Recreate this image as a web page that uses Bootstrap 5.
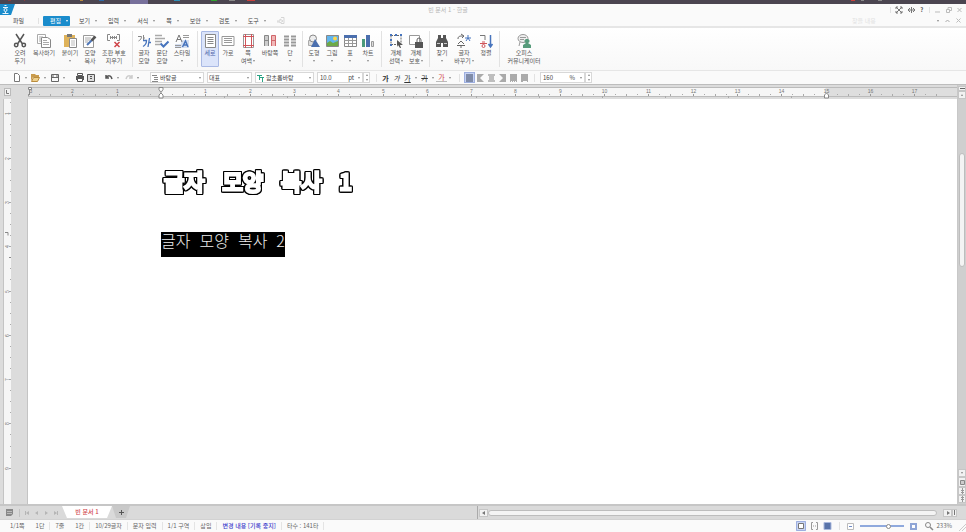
<!DOCTYPE html>
<html lang="ko">
<head>
<meta charset="utf-8">
<meta name="viewport" content="width=device-width, initial-scale=1">
<title>빈 문서 1 - 한글</title>
<link href="https://cdn.jsdelivr.net/npm/bootstrap@5.3.0/dist/css/bootstrap.min.css" rel="stylesheet">
<style>
body{font-family:"Noto Sans CJK KR",sans-serif;font-size:6px;line-height:8px;color:#555;background:#dcdcdc;overflow:hidden}
button,select,input{font:inherit;color:inherit}
button{background:none;border:0;padding:0}
svg{display:block;flex:none;overflow:visible}
.strip{height:4px;background:#4b4550}
.titlebar{height:11px;background:#fafafa}
.titlebar h1{font-size:6px;line-height:12px;color:#b5b5b5;font-weight:400}
.wincontrols{width:85px;padding:0 4px 0 9px}
.menubar{height:13px;background:#fafafa;border-bottom:2px solid #e6e6e6;padding-left:7px}
.menubtn{height:10px;padding:0 2px 0 7px;gap:5px;color:#444}
.menubtn.current{background:#1a8ccc;color:#fff;border-radius:1px}
.filebtn{width:23px;height:10px;color:#444}
.vline{width:1px;background:#e2e2e2;flex:none}
.caret{width:0;height:0;border:1px solid transparent;border-top:2px solid #888;border-bottom:0;flex:none;display:inline-block}
.current .caret{border-top-color:#fff}
.search{width:84px}
.search input{width:30px;border:0;background:none;padding:0;height:9px;line-height:9px}
.search input::placeholder{color:#e2e2e2;opacity:1}
.ribbon{height:43px;background:linear-gradient(#fff,#f8f8f8);border-bottom:1px solid #e6e6e6;padding:3px 11px}
.tool{height:36px;padding-top:2px;display:flex;flex-direction:column;align-items:center;flex:none;white-space:nowrap;border:1px solid transparent;border-radius:1px}
.tool svg{width:14px;height:14px;margin-bottom:1px}
.tool .caret{margin-top:3px}
.tool .caret.inrow{margin:0 0 1px 1px}
.tool.active{background:#dbe4fa;border-color:#a9b9e4;color:#4a61a8}
.w-a{width:18px}.w-b{width:22px}.w-c{width:26px}.w-d{width:30px}.w-e{width:42px}
.split{display:flex;justify-content:center;flex:none;width:6px;height:36px}
.split.wide{width:8px}
.quick{height:14px;background:#fafafa;border-bottom:1px solid #bdbdbd;padding-left:12px}
.qset{display:flex;align-items:center}
.qset button{display:flex;align-items:center;flex:none}
.box{height:11px;border:1px solid #d8d8d8;background:#fff;display:flex;align-items:center;color:#444}
.box select{appearance:none;border:0;background:none;padding:0 0 0 1px;flex:1;min-width:0;height:9px;line-height:9px}
.box input{border:0;padding:0 0 0 2px;width:28px;height:9px;line-height:9px;flex:1;min-width:0;background:none}
.box .caret{margin-right:2px}
.spin{width:7px;height:11px;border:1px solid #d8d8d8;background:#fff;display:flex;flex-direction:column;justify-content:space-around;align-items:center}
.up{transform:rotate(180deg)}
.ga{font-size:7px;line-height:8px;color:#333;width:11px;justify-content:center}
.qset .gap-caret{margin:0 2px}
.al{width:11px;height:11px;justify-content:center}
.al.active{background:#c6d2f2;border:1px solid #9dafe0}
.work{min-height:0;flex:1}
.rulerrow{height:14px;padding:2px 0 0 4px}
.rulerrow text,.vruler text{font-family:"Liberation Sans",sans-serif}
.cornerbtn{width:7px;height:8px;background:#f2f2f2;border:1px solid #bbb;margin:1px 17px 0 0;flex:none}
.vruler{width:8px;margin-left:3px;background:#f6f6f6;border-left:1px solid #c4c4c4;flex:none}
.desk{width:17px;flex:none;border-right:1px solid #c4c4c4}
.paper{background:#fff;min-width:0;padding:67px 0 0 133px;color:#000}
.words{display:flex;width:max-content;white-space:nowrap}
.outlined{font-size:22px;line-height:28px;gap:18px;padding-left:3px;color:#fff;-webkit-text-stroke:3px #fff;filter:drop-shadow(1px 0 0 #000) drop-shadow(-1px 0 0 #000) drop-shadow(0 1px 0 #000) drop-shadow(0 -1px 0 #000);margin-bottom:38px}
.chosen{font-size:16px;line-height:16px;height:25px;gap:9px;background:#000;color:#eee;font-weight:300}
.vscroll{width:9px;background:#cfcfcf;border-left:1px solid #c8c8c8;padding:1px 0}
.sb{background:#f2f2f2;border:1px solid #c6c6c6;display:flex;align-items:center;justify-content:center;flex:none;width:8px;height:8px}
.thumb{background:#f4f4f4;border:1px solid #bdbdbd;border-radius:4px}
.vthumb{width:6px;flex:113;margin-left:1px}
.tabs{height:15px;background:#dadada;border-top:2px solid #c6c6c6}
.tabnav{width:62px;padding-left:6px}
.tabsheet{height:12px;width:50px;background:#fff;clip-path:polygon(0 0,100% 0,calc(100% - 5px) 100%,5px 100%);color:#d0454a;font-weight:500}
.addtab{height:12px;width:18px;background:#c9c9c9;clip-path:polygon(0 0,100% 0,calc(100% - 4px) 100%,4px 100%);color:#555;display:flex;align-items:center;justify-content:center}
.hscroll{width:50.6%;padding:0 9px 0 1px;border-left:1px solid #aaa}
.hthumb{height:6px;margin-right:6px}
.status{height:13px;background:#fafafa;border-top:1px solid #d2d2d2;color:#666;white-space:nowrap}
.status .cell{padding:0 5px;border-right:1px solid #e4e4e4}
.status .cell.plain{border-color:transparent}
.zoomr{appearance:none;width:44px;height:8px;margin:0 2px;background:linear-gradient(#8fa9dd,#8fa9dd) center/100% 2px no-repeat}
.zoomr::-webkit-slider-thumb{appearance:none;width:5px;height:5px;border-radius:50%;border:1px solid #8a8a8a;background:#fff}
.zoomr::-webkit-slider-runnable-track{height:5px}
</style>
<script src="https://cdn.jsdelivr.net/npm/bootstrap@5.3.0/dist/js/bootstrap.bundle.min.js"></script>
</head>
<body class="d-flex flex-column vh-100">
<header>
  <div class="strip overflow-hidden"><svg width="100%" height="4"><path fill="#8b3c3c" d="M8 0h3v1H8zM24 0h1v1h-1z"/><path fill="#b98b3c" d="M80 0h3v1h-3z"/><path fill="#2e69a8" d="M99 0h5v1h-5z"/><path fill="#77709b" d="M130 0h18v4h-18z"/><path fill="#2e8fb8" d="M174 0h6v1h-6z"/><path fill="#2fa32f" d="M211 0h6v1h-6z"/><path fill="#888" d="M229 0h6v1h-6zM861 0h3v1h-3zM878 0h4v1h-4z"/><path fill="#c8403c" d="M247 0h8v1h-8zM851 0h4v1h-4z"/></svg></div>
  <div class="titlebar d-flex">
    <svg width="15" height="11"><path fill="#1a8ccc" d="M0 0h15l-4 11H0z"/><g stroke="#fff" stroke-width=".9" fill="none"><path d="M4.500 1.500h2M3 3.500h5M2.500 9.500h6M5.500 8v1.500"/><circle cx="5.500" cy="6" r="1.500"/></g></svg>
    <h1 class="flex-fill text-center m-0">빈 문서 1 - 한글</h1>
    <div class="wincontrols d-flex align-items-center justify-content-between">
      <span class="vline" style="height:6px"></span>
      <button aria-label="전체 화면"><svg width="6" height="6" stroke="#777" fill="none"><path d="M0 0l6 6M6 0L0 6M0 2V0h2M4 0h2v2M6 4v2H4M2 6H0V4"/></svg></button>
      <button aria-label="너비"><svg width="7" height="6" stroke="#777" fill="none"><path d="M0 3h7M2 1L0 3l2 2M5 1l2 2-2 2M3.500 0v6"/></svg></button>
      <button aria-label="도움말" class="fw-bold">?</button>
      <span class="vline" style="height:6px"></span>
      <button aria-label="최소화"><svg width="5" height="6" stroke="#bbb"><path d="M0 5h5"/></svg></button>
      <button aria-label="이전 크기"><svg width="6" height="6" stroke="#bbb" fill="none"><path d="M.5 2.500h3v3h-3zM2 2V.5h3.500v3H4"/></svg></button>
      <button aria-label="닫기"><svg width="5" height="6" stroke="#bbb"><path d="M.5 1l4 4M4.500 1l-4 4"/></svg></button>
    </div>
  </div>
  <nav class="menubar d-flex align-items-center">
    <button class="filebtn">파일</button><span class="vline" style="height:6px;margin:0 4px 0 8px"></span>
    <div class="d-flex" style="gap:2px">
      <button class="menubtn current d-flex align-items-center">편집<i class="caret"></i></button>
      <button class="menubtn d-flex align-items-center">보기<i class="caret"></i></button>
      <button class="menubtn d-flex align-items-center">입력<i class="caret"></i></button>
      <button class="menubtn d-flex align-items-center">서식<i class="caret"></i></button>
      <button class="menubtn d-flex align-items-center">쪽<i class="caret"></i></button>
      <button class="menubtn d-flex align-items-center">보안<i class="caret"></i></button>
      <button class="menubtn d-flex align-items-center">검토<i class="caret"></i></button>
      <button class="menubtn d-flex align-items-center">도구<i class="caret"></i></button>
      <button class="menubtn" aria-label="동기화"><svg width="8" height="7" stroke="#d5d5d5" fill="none"><path d="M0 4h3V2l3 2-3 2V5H0M4 .5h3v6H4"/></svg></button>
    </div>
    <div class="search ms-auto d-flex align-items-center"><input type="text" placeholder="찾을 내용" aria-label="찾을 내용"></div>
    <div class="d-flex align-items-center justify-content-between" style="width:30px;padding:0 5px 0 1px">
      <i class="caret"></i>
      <button aria-label="접기"><svg width="5" height="4" stroke="#aaa" fill="none"><path d="M.5 3l2-2 2 2"/></svg></button>
      <button aria-label="문서 닫기"><svg width="5" height="5" stroke="#bbb"><path d="M.5.5l4 4M4.500.5l-4 4"/></svg></button>
    </div>
  </nav>
  <div class="ribbon d-flex">
    <button class="tool w-a"><svg viewBox="0 0 14 14" fill="none" stroke="#555" stroke-width="1.500"><path d="M3 0l6.500 10M11 0L4.500 10"/><circle cx="3.200" cy="11" r="1.700"/><circle cx="10.800" cy="11" r="1.700"/></svg>오려<br>두기</button>
    <button class="tool w-d"><svg viewBox="0 0 14 14" fill="#fff" stroke="#aaa"><path d="M.5.5h8v9h-8z"/><path d="M4.500 3.500h6l3 2v8h-9z" stroke="#888"/><path d="M6 6.500h4M6 8.500h6M6 10.500h6M2 3h4M2 5h2M2 7h2"/></svg>복사하기</button>
    <button class="tool w-b"><svg viewBox="0 0 14 14"><path fill="#dfb35b" d="M1 1h11v12H1z"/><path fill="#777" d="M4 0h5v3H4z"/><path fill="#fff" stroke="#888" d="M6.500 4.500h7v9h-7z"/><path stroke="#bbb" d="M8 7h4M8 9h4M8 11h4"/></svg>붙이기<i class="caret"></i></button>
    <button class="tool w-a"><svg viewBox="0 0 14 14"><path fill="#fff" stroke="#999" d="M.5 1.500h10v12H.5z"/><path stroke="#aaa" d="M2 4h6M2 6h5M2 8h3"/><path stroke="#4f76b8" stroke-width="2" d="M4 11l5-5"/><path stroke="#555" stroke-width="2.500" d="M8.500 6.500l4-4"/></svg>모양<br>복사</button>
    <button class="tool w-d"><svg viewBox="0 0 14 14" fill="none"><path stroke="#888" d="M3 .5H.5v6H3M10 .5h2.500v6H10M3.500 2v3M9.500 2v3M5.500 2v3M7.500 2v3M3 3.500h7"/><path stroke="#d0454a" stroke-width="1.500" d="M7.500 8l5 5M12.500 8l-5 5"/></svg>조판 부호<br>지우기</button>
    <span class="split"><i class="vline"></i></span>
    <button class="tool w-a"><svg viewBox="0 0 14 14" fill="none"><g stroke="#888"><path d="M1 2.500h3.500c0 2-1 3.500-3 4.500M6.500 1v6M6.500 4H8"/></g><g stroke="#4774bd" stroke-width="1.300"><path d="M6 6.500h3.500c0 3-1 4.500-3.500 6M12.500 4l-1.500 9M12 8.500h2"/></g></svg>글자<br>모양</button>
    <button class="tool w-a"><svg viewBox="0 0 14 14" fill="none"><path stroke="#aaa" stroke-width="1.500" d="M0 1.500h7M0 4.500h10M0 7.500h7M0 10.500h5"/><path stroke="#4774bd" stroke-width="2" d="M5.500 9.500l3 3 5-5"/></svg>문단<br>모양</button>
    <button class="tool w-b"><svg viewBox="0 0 14 14" fill="none"><path fill="#d6e0f2" d="M6 6h8v8H0v-4h6z"/><path stroke="#999" d="M8 1.500h6M8 3.500h6M0 11.500h6M0 13.500h6"/><path stroke="#777" d="M1 8l3-7 3 7M2 5.500h4"/><path stroke="#4774bd" stroke-width="1.500" d="M7.500 13l3-6 2.500 6M8.500 11h4"/></svg>스타일<i class="caret"></i></button>
    <span class="split wide"><i class="vline"></i></span>
    <button class="tool w-a active" aria-pressed="true"><svg viewBox="0 0 14 14" fill="#fff" stroke="#888"><path d="M2.500.5h10v13h-10z"/><path d="M4.500 3.500h6M4.500 5.500h6M4.500 7.500h6M4.500 9.500h6"/></svg>세로</button>
    <button class="tool w-a"><svg viewBox="0 0 14 14" fill="#fff" stroke="#999"><path d="M1 2.500h12v9H1z"/><path d="M3 4.500h8M3 6.500h8M3 8.500h8"/></svg>가로</button>
    <button class="tool w-b"><svg viewBox="0 0 14 14" fill="#fff" stroke="#999"><path d="M2.500.5h10v13h-10z"/><path stroke="#d0555a" d="M4.500 0v14M10.500 0v14M2 2.500h11M2 11.500h11"/></svg><span>쪽</span><span>여백<i class="caret inrow"></i></span></button>
    <button class="tool w-b"><svg viewBox="0 0 14 14" fill="none"><path fill="#ccc" stroke="#888" d="M1.500 12V1.500h4v10.500M1.500 6.500h4"/><path fill="#f0b7b7" stroke="#d0666a" d="M8.500 12V1.500h4v10.500M8.500 6.500h4"/></svg>바탕쪽</button>
    <button class="tool w-a"><svg viewBox="0 0 14 14" stroke="#999" stroke-width="2"><path d="M1 2.500h5M8 2.500h5M1 5.500h5M8 5.500h5M1 8.500h5M8 8.500h5M1 11.500h5M8 11.500h5"/></svg>단<i class="caret"></i></button>
    <span class="split"><i class="vline"></i></span>
    <button class="tool w-a"><svg viewBox="0 0 14 14"><path fill="#ddd" stroke="#aaa" d="M1.500 6.500h6v5h-6z"/><circle cx="6" cy="4.500" r="3.500" fill="#eee" stroke="#888"/><path fill="#4b6fae" d="M8 5l5 8H4z"/></svg>도형<i class="caret"></i></button>
    <button class="tool w-a"><svg viewBox="0 0 14 14"><path fill="#62b5ed" stroke="#888" d="M1.500 1.500h12v11h-12z"/><path fill="#6da947" d="M2 9l3-2 3 2 5-2v5H2z"/><circle cx="10" cy="4.500" r="2" fill="#ffd84d"/></svg>그림<i class="caret"></i></button>
    <button class="tool w-a"><svg viewBox="0 0 14 14" fill="#fff"><path stroke="#888" d="M1.500 1.500h12v11h-12z"/><path fill="#4b6fae" d="M1 1h13v3H1z"/><path stroke="#999" d="M5.500 4v8M9.500 4v8M1 6.500h12M1 9.500h12"/></svg>표<i class="caret"></i></button>
    <button class="tool w-a"><svg viewBox="0 0 14 14"><path fill="#4b9b7b" d="M1 5h3v8H1z"/><path fill="#4b6fae" d="M5 1h4v12H5z"/><path fill="#ddd" stroke="#999" d="M10.500 7.500h2v5h-2z"/></svg>차트<i class="caret"></i></button>
    <span class="split wide"><i class="vline"></i></span>
    <button class="tool w-b"><svg viewBox="0 0 14 14" fill="none"><path stroke="#666" stroke-dasharray="2 1" d="M2 1.500h10v9H2z"/><path fill="#4774bd" d="M1 0h2v2H1zM6 0h2v2H6zM11 0h2v2h-2zM1 5h2v2H1zM1 10h2v2H1z"/><path fill="#555" d="M8 6l6 5h-3l1 3h-1l-2-3-1 2z"/></svg><span>개체</span><span>선택<i class="caret inrow"></i></span></button>
    <button class="tool w-a"><svg viewBox="0 0 14 14" fill="#fff"><path stroke="#999" d="M.5 1.500h10v9H.5z"/><path stroke="#666" fill="none" d="M8 8V6a2 2 0 0 1 4 0v2"/><path fill="#555" d="M6 8h8v6H6z"/></svg><span>개체</span><span>보호<i class="caret inrow"></i></span></button>
    <span class="split wide"><i class="vline"></i></span>
    <button class="tool w-a"><svg viewBox="0 0 14 14" fill="#555"><path d="M3 1h3v3h2V1h3v3l2 4v5H8V9H6v4H1V8l2-4z"/><path fill="#ccc" d="M2 9h3v1H2zM9 9h3v1H9z"/></svg>찾기<i class="caret"></i></button>
    <button class="tool w-c"><svg viewBox="0 0 14 14" fill="none"><path stroke="#666" d="M1 5c0-3 2-3 5-3M4 0l3 2-2 2M4 7L1 10M4 7l3 3M0 11.500h8M4 11.500V14"/><path stroke="#4774bd" d="M11 1v3M8 4h6M11 4L9 7M11 4l2 3"/></svg><span>글자</span><span>바꾸기<i class="caret inrow"></i></span></button>
    <button class="tool w-a"><svg viewBox="0 0 14 14" fill="none"><path stroke="#777" d="M1 1.500h5V6"/><path stroke="#d0555a" d="M3 8h3M1 9.500h7"/><circle cx="4.500" cy="12" r="1.500" stroke="#d0555a"/><path stroke="#4774bd" stroke-width="1.500" d="M11.500 1v11M9.500 10l2 3 2-3"/></svg>정렬</button>
    <span class="split wide"><i class="vline"></i></span>
    <button class="tool w-e"><svg viewBox="0 0 14 14"><ellipse cx="6" cy="4.500" rx="5" ry="4" fill="#eee" stroke="#999"/><path stroke="#999" d="M3 3.500h6M3 5.500h4M3 8l-1 4"/><path fill="#579b7b" d="M10 5a2 2 0 0 1 1 4l3 2v3H6v-3l3-2a2 2 0 0 1 1-4z"/></svg>오피스<br>커뮤니케이터</button>
  </div>
  <div class="quick d-flex align-items-center">
    <div class="qset" style="gap:4px;width:58px">
      <button aria-label="새 문서" style="gap:4px"><svg width="9" height="9" fill="#fff" stroke="#777"><path d="M2.500.5h3l2 2v6h-5z"/></svg><i class="caret"></i></button>
      <button aria-label="불러오기" style="gap:4px"><svg width="9" height="9"><path fill="#c99b4c" d="M0 1h4l1 1h3v2H2L0 8z"/><path fill="#efd08b" stroke="#b98b3c" d="M2.500 4.500h6l-2 4h-6z"/></svg><i class="caret"></i></button>
      <button aria-label="저장" style="gap:4px"><svg width="9" height="9" fill="none" stroke="#666"><path d="M1.500 1.500h7v7h-7zM1.500 4.500h7M3 1v3M7 1v3"/></svg><i class="caret"></i></button>
    </div>
    <div class="qset" style="gap:3px;width:35px;padding-left:6px">
      <button aria-label="인쇄"><svg width="8" height="9"><path fill="#555" d="M0 3h8v4H0z"/><path fill="#fff" stroke="#555" d="M1.500.5h5v2h-5zM1.500 5.500h5v3h-5z"/></svg></button>
      <button aria-label="미리 보기"><svg width="8" height="9" fill="#ddd" stroke="#555"><path d="M.5 1.500h7v7h-7z"/><path d="M3 3.500h2M3 5.500h2"/></svg></button>
    </div>
    <div class="qset" style="gap:6px;width:45px">
      <button aria-label="되돌리기" style="gap:4px"><svg width="8" height="7" fill="none" stroke="#555" stroke-width="1.500"><path d="M1 1v3h3M1 4c2-3 5-3 6 1"/></svg><i class="caret"></i></button>
      <button aria-label="다시 실행" style="gap:4px"><svg width="8" height="7" fill="none" stroke="#ccc" stroke-width="1.500"><path d="M7 1v3H4M7 4C5 1 2 1 1 5"/></svg><i class="caret"></i></button>
    </div>
    <div class="qset" style="gap:3px">
      <div class="box" style="width:54px"><svg width="8" height="8" stroke="#888"><path d="M1 1.500h5M3 3.500h4M3 5.500h4M1 7.500h6"/></svg><select aria-label="스타일"><option>바탕글</option></select><i class="caret"></i></div>
      <div class="box" style="width:45px"><select aria-label="언어"><option>대표</option></select><i class="caret"></i></div>
      <div class="box" style="width:59px"><svg width="9" height="8" style="stroke:#29a383" fill="none"><path d="M1 1.500h5M3.500 1v5M4 3.500h4M6.500 3v5"/></svg><select aria-label="글꼴"><option>함초롬바탕</option></select><i class="caret"></i></div>
      <div class="d-flex"><div class="box" style="width:46px"><input type="text" value="10.0" aria-label="글자 크기"><span class="px-1">pt</span><i class="caret"></i></div><button class="spin" aria-label="크기 조절"><i class="caret up"></i><i class="caret"></i></button></div>
    </div>
    <span class="vline" style="height:8px;margin:0 3px 0 6px"></span>
    <div class="qset">
      <button class="ga fw-bold" aria-label="진하게">가</button>
      <button class="ga fst-italic" aria-label="기울임">가</button>
      <button class="ga text-decoration-underline" aria-label="밑줄">가</button><i class="caret gap-caret"></i>
      <button class="ga text-decoration-line-through" aria-label="취소선">가</button><i class="caret gap-caret"></i>
      <button class="ga" style="color:#d0454a;border-bottom:1px solid #bbb" aria-label="글자 색">가</button><i class="caret gap-caret"></i>
    </div>
    <span class="vline" style="height:8px;margin:0 4px 0 6px"></span>
    <div class="qset">
      <button class="al active" aria-label="양쪽 정렬"><svg width="7" height="8"><path fill="#7f8ba8" d="M0 0h7v8H0z"/></svg></button>
      <button class="al" aria-label="왼쪽 정렬"><svg width="7" height="8"><path fill="#aaa" d="M0 0h7L3 4l4 4H0z"/></svg></button>
      <button class="al" aria-label="가운데 정렬"><svg width="7" height="8" stroke="#aaa" stroke-width="1.500"><path d="M0 1h7M1 3h5M1 5h5M0 7h7"/></svg></button>
      <button class="al" aria-label="오른쪽 정렬"><svg width="7" height="8"><path fill="#aaa" d="M0 0h7v8H0l4-4z"/></svg></button>
      <button class="al" aria-label="배분 정렬"><svg width="7" height="8"><path fill="#aaa" d="M0 0h7v8H6V7H5v1H4V7H3v1H2V7H1v1H0z"/></svg></button>
      <button class="al" aria-label="나눔 정렬"><svg width="7" height="8"><path fill="#aaa" d="M0 0h7v8H6V7H2v1H0z"/></svg></button>
    </div>
    <span class="vline" style="height:8px;margin:0 5px 0 4px"></span>
    <div class="box" style="width:45px"><input type="text" value="160" aria-label="줄 간격"><span style="padding:0 5px">%</span><i class="caret"></i></div><button class="spin" aria-label="줄 간격 조절"><i class="caret up"></i><i class="caret"></i></button>
  </div>
</header>
<main class="work d-flex">
  <div class="flex-fill d-flex flex-column" style="min-width:0">
    <div class="rulerrow d-flex">
      <button class="cornerbtn" aria-label="탭 종류"><svg width="5" height="6" stroke="#777" fill="none"><path d="M1.500 1v3.500H4"/></svg></button>
      <svg id="hr" class="flex-fill overflow-hidden" height="12" style="width:0"></svg>
    </div>
    <div class="flex-fill d-flex" style="min-height:0">
      <div class="vruler overflow-hidden"><svg id="vr" width="8" height="1200"></svg></div>
      <div class="desk"></div>
      <article class="paper flex-fill">
        <div class="words outlined"><span>글자</span><span>모양</span><span>복사</span><span>1</span></div>
        <div class="words chosen"><span>글자</span><span>모양</span><span>복사</span><span>2</span></div>
      </article>
    </div>
  </div>
  <div class="vscroll d-flex flex-column">
    <button class="sb" style="height:5px" aria-label="나누기"><svg width="5" height="1"><path fill="#666" d="M0 0h5v1H0z"/></svg></button>
    <button class="sb" aria-label="위로"><i class="caret up"></i></button>
    <div style="flex:54"></div><div class="thumb vthumb"></div><div style="flex:203"></div>
    <button class="sb" aria-label="아래로"><i class="caret"></i></button>
    <button class="sb" style="height:10px" aria-label="개체 선택"><svg width="5" height="5" fill="#ccc" stroke="#888"><path d="M.5.5h4v4h-4z"/></svg></button>
    <button class="sb" aria-label="이전 쪽"><svg width="5" height="6" stroke="#999"><path d="M1 2.500h3M1 4.500h3M2.500 0v6"/></svg></button>
    <button class="sb" aria-label="다음 쪽"><svg width="5" height="6" stroke="#999"><path d="M1 1.500h3M1 3.500h3M2.500 0v6"/></svg></button>
  </div>
</main>
<footer>
  <div class="tabs d-flex">
    <div class="tabnav d-flex align-items-center justify-content-between pe-1">
      <button aria-label="문서 목록"><svg width="7" height="7"><path fill="#888" d="M0 0h7v5L5 7H0z"/><path stroke="#bbb" d="M1 2.500h5M1 4.500h5"/></svg></button><span class="vline" style="height:8px;background:#c2c2c2"></span>
      <button aria-label="처음 탭"><svg width="4" height="4" fill="#b5b5b5"><path d="M0 0h1v4H0zM4 0v4L1 2z"/></svg></button>
      <button aria-label="이전 탭"><svg width="4" height="4" fill="#b5b5b5"><path d="M3 0v4L0 2z"/></svg></button>
      <button aria-label="다음 탭"><svg width="4" height="4" fill="#b5b5b5"><path d="M1 0v4l3-2z"/></svg></button>
      <button aria-label="마지막 탭"><svg width="4" height="4" fill="#b5b5b5"><path d="M3 0h1v4H3zM0 0v4l3-2z"/></svg></button>
    </div>
    <button class="tabsheet">빈 문서 1</button><button class="addtab" aria-label="새 탭"><svg width="5" height="5" stroke="#555"><path d="M0 2.500h5M2.500 0v5"/></svg></button>
    <div class="hscroll ms-auto d-flex align-items-center">
      <button class="sb" style="width:9px" aria-label="왼쪽으로"><svg width="4" height="4" fill="#777"><path d="M3 0v4L0 2z"/></svg></button>
      <div class="thumb hthumb flex-fill"></div>
      <button class="sb" style="width:9px" aria-label="오른쪽으로"><svg width="4" height="4" fill="#777"><path d="M1 0v4l3-2z"/></svg></button>
      <button class="sb" style="width:5px" aria-label="세로 나누기"><svg width="1" height="5"><path fill="#777" d="M0 0h1v5H0z"/></svg></button>
    </div>
  </div>
  <div class="status d-flex align-items-center">
    <span class="cell plain" style="padding-left:10px">1/1쪽</span><span class="cell">1단</span><span class="cell plain">7줄</span><span class="cell">1칸</span><span class="cell">10/29글자</span><span class="cell">문자 입력</span><span class="cell">1/1 구역</span><span class="cell">삽입</span><span class="cell" style="color:#3a3acb;font-weight:500">변경 내용 [기록 중지]</span><span class="cell">타수 : 141타</span>
    <div class="ms-auto d-flex align-items-center" style="gap:4px">
      <button aria-label="쪽 윤곽" style="background:#c9d5f3"><svg width="10" height="10" fill="#fff"><path fill="none" stroke="#9dafe0" d="M.5.5h9v9h-9z"/><path stroke="#777" d="M2.500 2.500h5v5h-5z"/></svg></button>
      <button aria-label="폭 맞춤"><svg width="9" height="8" fill="none" stroke="#999"><path d="M3 .5H1.500v7H3M6 .5h1.500v7H6M3 4h1M5 4h1"/></svg></button>
      <button aria-label="전체 화면 보기"><svg width="9" height="8" fill="#5873a9" stroke="#aab9dd"><path d="M1 .5h7v7H1z"/></svg></button>
      <span class="vline" style="height:8px;margin:0 3px"></span>
      <button aria-label="축소"><svg width="7" height="7" fill="#fff"><path stroke="#bbb" d="M.5.5h6v6h-6z"/><path fill="#6e8bc9" d="M2 3h3v1H2z"/></svg></button>
      <input type="range" class="zoomr" min="0" max="100" value="65" aria-label="배율">
      <button aria-label="확대"><svg width="7" height="7" fill="#fff" stroke="#8fa5d6" stroke-width="2"><path d="M1 1h5v5H1z"/></svg></button>
      <button aria-label="배율 설정" class="d-flex align-items-center" style="gap:3px;margin-left:4px"><svg width="8" height="8" fill="none" stroke="#888"><circle cx="3" cy="3" r="2.500"/><path stroke-width="1.500" d="M5 5l3 3"/></svg><span>233%</span></button>
      <svg width="10" height="8" stroke="#ccc" class="align-self-end"><path d="M3 8l7-7M6 8l4-4"/></svg>
    </div>
  </div>
</footer>
<script>
const NS='http://www.w3.org/2000/svg',CM=44.3;
function put(p,n,a,t){const e=document.createElementNS(NS,n);for(const k in a)e.setAttribute(k,a[k]);if(t!==undefined)e.textContent=t;p.appendChild(e)}
const h=document.getElementById('hr'),v=document.getElementById('vr'),zero=133;
put(h,'rect',{x:0,y:0,width:'100%',height:9,fill:'#dedede'});
put(h,'rect',{x:zero,y:0,width:CM*15,height:9,fill:'#f6f6f6'});
put(h,'path',{d:'M0 .5H3000M0 9.500H3000',stroke:'#bbb'});
const wide=Math.floor((innerWidth-50-zero)/CM*4);
for(let i=-12;i<=wide;i++){const x=Math.round(zero+i*CM/4)+.5;
  if(i%4)put(h,'path',{d:`M${x} 7v${i%2?1:2}`,stroke:'#aaa'});
  else if(i&&x>0){put(h,'path',{d:`M${x} 7v2`,stroke:'#999'});put(h,'text',{x:Math.max(x,3),y:6,'font-size':5,'text-anchor':'middle',fill:'#777'},Math.abs(i/4))}}
for(let x=zero+63;x<zero+CM*15;x+=63)put(h,'path',{d:`M${x}.5 9v2`,stroke:'#aaa'});
const mark='fill:#fff;stroke:#888';
put(h,'path',{d:'M.5 .5h3v2h-3zM1.500 2v6',style:mark});
put(h,'path',{d:`M${zero-2} .5h4v2l-2 3-2-3zM${zero-2} 11v-3l2-2 2 2v3z`,style:mark});
put(h,'path',{d:`M${zero+CM*15-1} 11v-3l2-2 2 2v3z`,style:mark});
const tall=Math.floor((innerHeight-145)/CM*4)+2;
for(let i=-1;i<=tall;i++){const y=Math.round(-30+i*CM/4)+.5;
  if(y<0)continue;
  put(v,'path',{d:`M${i%4?6:5} ${y}h2`,stroke:'#aaa'});
  if(i%4===0)put(v,'text',{x:0,y:0,transform:`translate(5 ${y}) rotate(-90)`,'font-size':5,'text-anchor':'middle',fill:'#777'},i/4)}
put(v,'path',{d:'M1 133.500h3v3M5 158.500h3v-3',fill:'none',stroke:'#888'});
</script>
</body>
</html>
